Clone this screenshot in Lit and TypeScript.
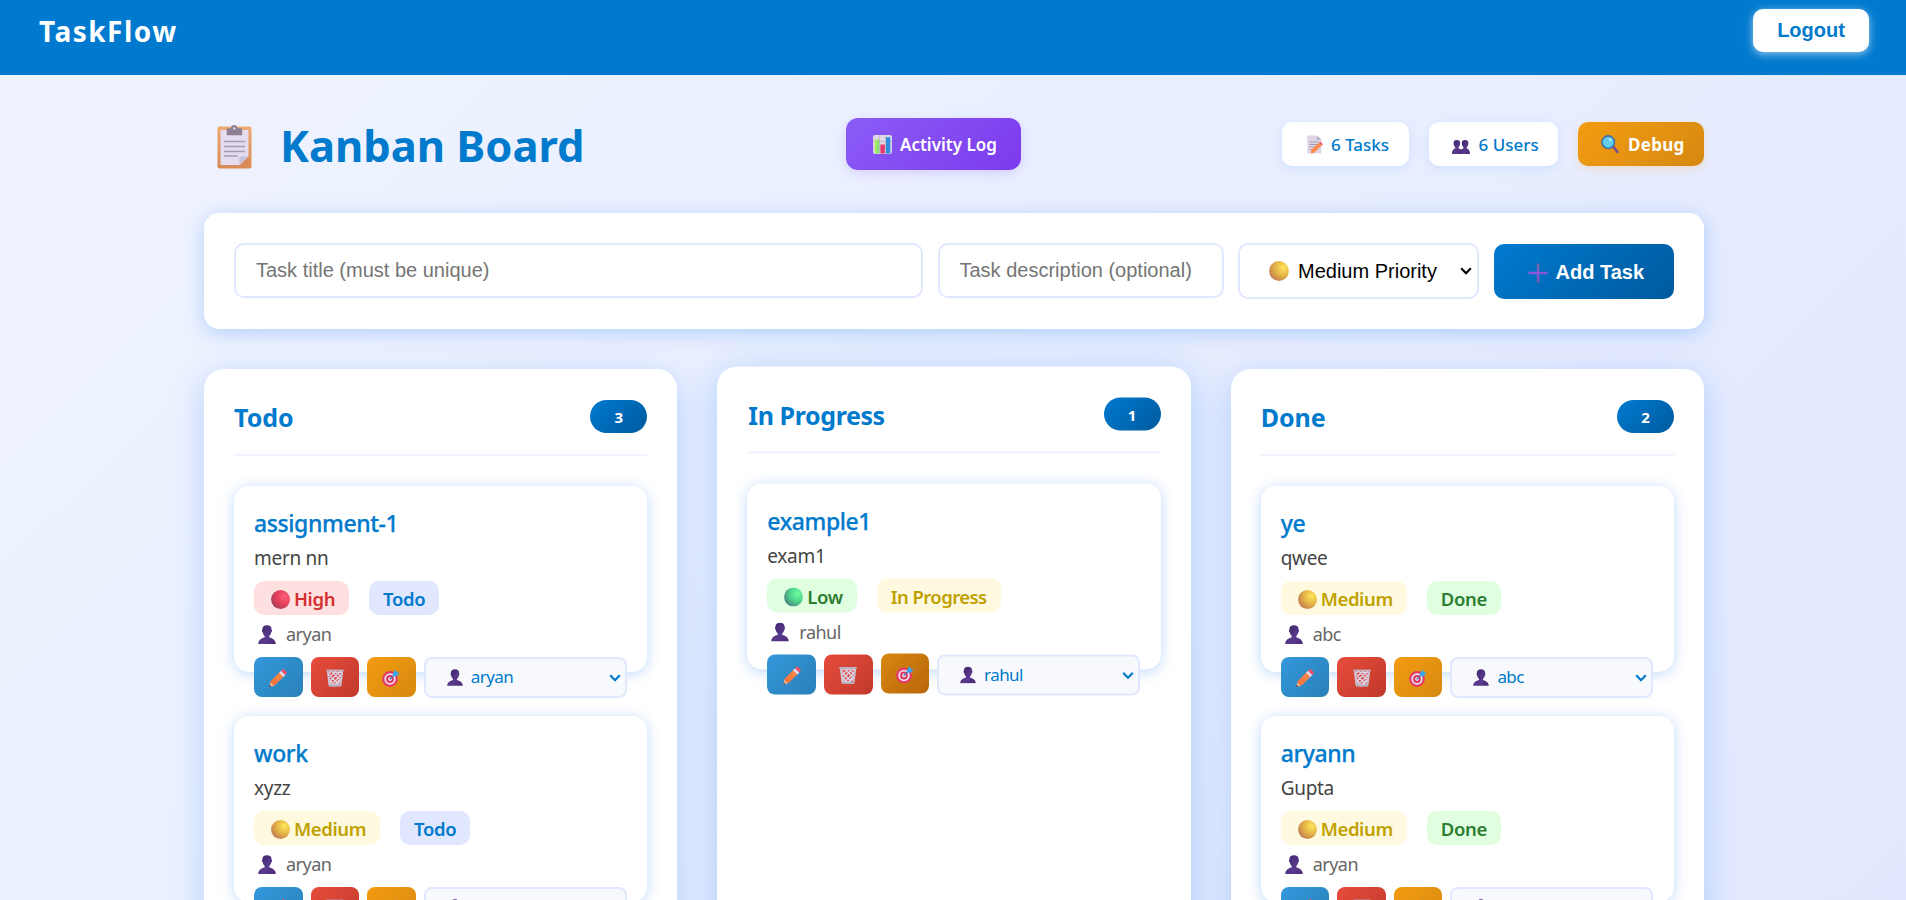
import { LitElement, html, svg, css } from "lit";
import { customElement } from "lit/decorators.js";

interface Task { title: string; desc: string; priority: "High" | "Medium" | "Low"; user: string; active?: boolean }
interface Column { name: string; count: number; key: string; tasks: Task[] }

const columns: Column[] = [
  { name: "Todo", count: 3, key: "todo", tasks: [
    { title: "assignment-1", desc: "mern nn", priority: "High", user: "aryan" },
    { title: "work", desc: "xyzz", priority: "Medium", user: "aryan" },
  ] },
  { name: "In Progress", count: 1, key: "progress", tasks: [
    { title: "example1", desc: "exam1", priority: "Low", user: "rahul", active: true },
  ] },
  { name: "Done", count: 2, key: "done", tasks: [
    { title: "ye", desc: "qwee", priority: "Medium", user: "abc" },
    { title: "aryann", desc: "Gupta", priority: "Medium", user: "aryan" },
  ] },
];

const defs = svg`
  <linearGradient id="g-person" x1="0" y1="0" x2="1" y2="1"><stop offset="0" stop-color="#3b2363"/><stop offset=".6" stop-color="#5a3a8e"/><stop offset="1" stop-color="#4a2a72"/></linearGradient>
  <radialGradient id="g-High" cx=".72" cy=".35" r=".75"><stop offset="0" stop-color="#ff5f7c"/><stop offset=".55" stop-color="#e5405a"/><stop offset="1" stop-color="#a54058"/></radialGradient>
  <radialGradient id="g-Medium" cx=".72" cy=".32" r=".8"><stop offset="0" stop-color="#ffe65c"/><stop offset=".55" stop-color="#e2b045"/><stop offset="1" stop-color="#c07a55"/></radialGradient>
  <radialGradient id="g-Low" cx=".72" cy=".32" r=".8"><stop offset="0" stop-color="#6effa0"/><stop offset=".55" stop-color="#4cd08a"/><stop offset="1" stop-color="#4a7f80"/></radialGradient>
  <linearGradient id="g-pencil" x1="1" y1="0" x2="0" y2="1"><stop offset="0" stop-color="#ff8a4a"/><stop offset="1" stop-color="#f0703a"/></linearGradient>
  <linearGradient id="g-board" x1="0" y1="0" x2="0" y2="1"><stop offset="0" stop-color="#eeaa72"/><stop offset="1" stop-color="#d98a55"/></linearGradient>
  <linearGradient id="g-plus" x1="0" y1="0" x2="0" y2="1"><stop offset="0" stop-color="#7a6a9c"/><stop offset=".5" stop-color="#8a55d8"/><stop offset="1" stop-color="#7a58b0"/></linearGradient>
  <linearGradient id="g-green" x1="0" y1="0" x2="1" y2="0"><stop offset="0" stop-color="#b4ef5a"/><stop offset="1" stop-color="#7fdc7a"/></linearGradient>
`;

const ball = (p: string, cls = "ic19") => html`<svg class=${cls} viewBox="0 0 20 20"><circle cx="10" cy="10" r="9.9" fill="url(#g-${p})"/></svg>`;
const person = (cls: string) => html`<svg class=${cls} viewBox="0 0 18 19"><path d="M9 0.2C6 0.2 4.400 1.600 4.400 4.400c-.6.2-.6 2.400.3 2.800.3 1.700 1.100 3 2 3.700v1.300C4 13.200.3 14.500.2 18.900h17.600c-.1-4.400-3.800-5.700-6.500-6.700v-1.300c.9-.7 1.700-2 2-3.700.9-.4.9-2.600.3-2.800C13.600 1.600 12 .2 9 .2z" fill="url(#g-person)"/></svg>`;
const people = html`<svg class="people" viewBox="0 0 18 14"><g fill="url(#g-person)"><path d="M4.900.1C2.500.1 1.600 1.200 1.600 3c0 1.800.6 3.400 1.700 4.300v1C1.500 9.100.1 10.200 0 13.900h9V9.500L6.500 8.300v-1C7.600 6.400 8.200 4.800 8.200 3 8.200 1.200 7.300.1 4.900.1z"/><path d="M13.100.1c-2.400 0-3.300 1.100-3.300 2.900 0 1.800.6 3.400 1.700 4.300v1L9 9.500v4.400H18c-.1-3.700-1.500-4.800-3.300-5.600v-1c1.100-.9 1.700-2.500 1.700-4.300 0-1.800-.9-2.900-3.300-2.900z"/></g></svg>`;
const pencil = html`<svg class="ic18" viewBox="0 0 18 18"><path d="M1.400 12.400 11 2.800l4.200 4.200-9.600 9.600-4.800 1.200z" fill="url(#g-pencil)"/><path d="M.3 17.900l1-4.600 3.600 3.600z" fill="#e8b99a"/><path d="M.2 18l.5-2.200L2.500 17.500z" fill="#5a3040"/><path d="M10.100 3.700l1.900-1.900 4.300 4.300-1.900 1.900z" fill="#e3dcec"/><path d="M12 1.800 13.200.7c.6-.6 1.500-.6 2.100 0l2 2c.6.600.6 1.500 0 2.100l-1.100 1.200z" fill="#f8506a"/></svg>`;
const trash = html`<svg class="ic18" viewBox="0 0 18 18"><path d="M1.300 1.500h15.400L14.900 17.500H3.100z" fill="#e04a50"/><g stroke="#dcd6e4" stroke-width="1.300" fill="none"><path d="M2.200 5l3.300-3 9.300 9.500-5.500 5.500L2.600 9.500 9.500 2l6.300 6.600L7.300 17 3.300 13 14 2l2.300 3L4.500 16.500M5.500 2 2.500 5l11 11.500M13 2l3 3"/></g><path d="M1.600 1.500 3.500 17M16.400 1.500 14.500 17" stroke="#c9c3d2" stroke-width="1.700"/><path d="M.4.600h17.200v1.800H.4z" fill="#bdb4c4"/><path d="M3 15.600h12v2H3z" fill="#b5adbd"/></svg>`;
const target = html`<svg class="ic18" viewBox="0 0 18 18"><circle cx="8" cy="10" r="7.900" fill="#e33a68"/><circle cx="8" cy="10" r="5.700" fill="#f0dfea"/><circle cx="8" cy="10" r="3.900" fill="#dd3563"/><circle cx="8" cy="10" r="1.900" fill="#f0dfea"/><path d="M7.700 10.300 13 5" stroke="#3b6fb0" stroke-width="1.200"/><path d="M10.700 4.200 14 .6l.7 2.700L17.700 4l-3.300 3.500-3-.5z" fill="#38a4ee"/></svg>`;
const clipboard = html`<svg class="clip" viewBox="0 0 35 44"><rect x=".5" y="1.500" width="34" height="42" rx="2" fill="url(#g-board)"/><path d="M3.500 5h28v27l-8 8h-20z" fill="#e6dcf0"/><path d="M22.500 40.500v-9.200h9z" fill="#c9c0dc"/><path d="M22.500 40.500 31.500 31.500v9z" fill="#d98a55"/><g stroke="#a59ab0" stroke-width="1.500"><path d="M7 16.500h21M7 21.500h21M7 26.500h21M7 31h13.500"/></g><path d="M9.700 5c0-1 .8-1.800 1.800-1.800h2.300C14.200 1.200 15.300 0 17.200 0s3 1.200 3.400 3.200h2.800c1 0 1.800.8 1.800 1.800v5.200H9.700z" fill="#8c8092"/><circle cx="17.300" cy="3.500" r="1.200" fill="#e6dcf0"/></svg>`;
const chart = html`<svg class="ic19" viewBox="0 0 19 19"><rect width="19" height="19" rx="2" fill="#ded6e4"/><path d="M0 6.500h19M0 12.500h19M6.500 0v19M12.500 0v19" stroke="#bcb2c6" stroke-width=".7"/><rect x="1.800" y="4.500" width="4.400" height="14" fill="url(#g-green)"/><rect x="7.400" y="9.500" width="4.400" height="9" fill="#e23a6a"/><rect x="13" y="2.200" width="4.300" height="16.300" fill="#2f8fdc"/></svg>`;
const memo = html`<svg class="memo" viewBox="0 0 17 19"><path d="M.3.500h9.500l4.500 4.500v13.500H.3z" fill="#ded6e6"/><path d="M9.800.500v4.500h4.500z" fill="#b9afc4"/><path d="M2.500 7h9M2.500 9.500h8M2.500 12h6M2.500 14.500h3" stroke="#a59bb0" stroke-width="1"/><path d="M4.500 14.500 12 7.700l2.700 2.800-7.600 7.200-3.400.8z" fill="#fb8a4c"/><path d="M12 7.700l1.300-1.200 2.700 2.800-1.300 1.200z" fill="#f5566b"/></svg>`;
const lens = html`<svg class="lens" viewBox="0 0 18 19"><path d="M10.500 11.500 12.500 10l5.200 6.200c.7 1-.9 2.600-2 1.900z" fill="#7e4f8c"/><circle cx="7.200" cy="7.200" r="6.300" fill="#62cdea" stroke="#3f6ea5" stroke-width="1.600"/><ellipse cx="9.200" cy="4.600" rx="1.600" ry="1.100" fill="#b6edf8" transform="rotate(35 9.200 4.600)"/></svg>`;
const plus = html`<svg class="plus" viewBox="0 0 20 20"><path d="M8.800.5h2.400v8.300h8.300v2.400h-8.300v8.300H8.800v-8.300H.5V8.800h8.300z" fill="url(#g-plus)"/></svg>`;
const chevron = html`<svg class="chev" viewBox="0 0 12 8"><path d="M1.200 1.300 6 6.200l4.800-4.900" fill="none" stroke="currentColor" stroke-width="2.200"/></svg>`;

@customElement("app-root")
export class AppRoot extends LitElement {
  static styles = css`
    :host { display: block; height: 900px; overflow: hidden; box-sizing: border-box; font-family: "Noto Sans", sans-serif; color: #007acc;
      background: linear-gradient(135deg, #f0f4ff 0%, #e0e7ff 100%) 0 0 / 100% 1260px no-repeat; }
    * { box-sizing: border-box; }
    svg { display: block; flex: none; }
    .defs { width: 0; height: 0; position: absolute; }
    .top { height: 75px; background: #007acf; display: flex; align-items: flex-start; justify-content: space-between; padding: 9px 37px 0 39px; }
    .brand { margin-top: 2px; line-height: 40px; font-size: 28px; font-weight: 700; color: #fff; letter-spacing: 1.500px; }
    .logout { width: 116px; height: 43px; border-radius: 10px; background: #fff; font: 700 20px/43px "Liberation Sans", Arial, sans-serif; text-align: center; box-shadow: 0 2px 8px rgba(255,255,255,.6); }
    .main { width: 1500px; margin: 0 0 0 204px; padding-top: 39px; }
    .head { height: 60px; display: flex; justify-content: space-between; align-items: center; }
    h1 { margin: 0; width: 381px; padding: 2px 0 0 13px; line-height: 60px; display: flex; align-items: center; font-size: 43.500px; font-weight: 700; white-space: nowrap; }
    .clip { width: 35px; height: 44px; margin: 3px 28px 0 0; }
    .activity { width: 175px; height: 52px; border-radius: 12px; display: flex; align-items: center; gap: 8px; padding-left: 27px; color: #fff; font-size: 17px; font-weight: 600; background: linear-gradient(135deg, #8b5cf6, #7c3aed); box-shadow: 0 4px 12px rgba(139,92,246,.2); white-space: nowrap; }
    .chips { display: flex; gap: 20px; width: 422px; }
    .chip { height: 44px; border-radius: 10px; background: #fff; display: flex; align-items: center; font-size: 17px; font-weight: 500; white-space: nowrap; box-shadow: 0 3px 10px rgba(0,122,255,.1); }
    .chip.tasks { width: 127px; padding-left: 25px; gap: 7px; }
    .chip.users { width: 129px; padding-left: 23px; gap: 8.500px; }
    .chip.debug { width: 126px; padding-left: 23px; gap: 9px; color: #fff; font-weight: 700; letter-spacing: .3px; background: linear-gradient(135deg, #f39c12, #d68910); box-shadow: 0 3px 10px rgba(243,156,18,.2); }
    .memo { width: 17px; height: 19px; } .lens { width: 18px; height: 19px; }
    .people { width: 18px; height: 14px; margin-top: 6px; }
    .ic18 { width: 18px; height: 18px; } .ic19 { width: 19px; height: 19px; } .ic20 { width: 20px; height: 20px; }
    .form { margin-top: 39px; height: 116px; padding: 30px; border-radius: 15px; background: #fff; display: flex; align-items: flex-start; gap: 14.500px; font: 400 20px "Liberation Sans", Arial, sans-serif; box-shadow: 0 4px 20px rgba(0,110,240,.25); }
    .field { height: 55px; border: 2px solid #e0e7ff; border-radius: 10px; padding-left: 20px; line-height: 50px; color: #757575; white-space: nowrap; }
    .field.title { width: 689px; } .field.desc { width: 286px; }
    .pick { width: 241px; height: 56px; border: 2px solid #e0e7ff; border-radius: 10px; display: flex; align-items: center; padding: 0 5px 0 29px; color: #000; }
    .pick span { margin-left: 9px; flex: 1; white-space: nowrap; } .pick .chev { width: 12px; height: 8px; }
    .add { width: 180.500px; height: 55px; margin-top: 1px; border-radius: 10px; display: flex; align-items: center; gap: 8px; padding: 2px 0 0 34px; color: #fff; font-weight: 700; background: linear-gradient(135deg, #007acf, #005a9e); white-space: nowrap; }
    .plus { width: 20px; height: 20px; }
    .board { margin-top: 40px; display: grid; grid-template-columns: repeat(3, 1fr); gap: 40px; }
    .col { height: 900px; border-radius: 20px; background: #fff; padding: 30px; box-shadow: 0 8px 32px rgba(0,110,240,.23); }
    .col.progress { transform: translateY(-2.500px); box-shadow: 0 8px 38px rgba(0,110,240,.28); }
    .col-head { height: 57px; border-bottom: 2px solid #f0f4ff; display: flex; justify-content: space-between; align-items: flex-start; margin-bottom: 30px; }
    h2 { margin: 0; font-size: 25px; line-height: 36px; font-weight: 700; }
    .progress h2 { letter-spacing: -.4px; padding-left: 1px; }
    .count { width: 57px; height: 33px; margin-top: 1px; border-radius: 17px; background: linear-gradient(135deg, #007acf, #005a9e); color: #fff; font-size: 15px; line-height: 34px; font-weight: 700; text-align: center; }
    .card { height: 186px; margin-bottom: 44px; padding: 20px; border-radius: 15px; background: #fff; box-shadow: 0 2px 14px rgba(0,110,240,.26); }
    h3 { margin: 0; font-size: 23px; line-height: 34px; font-weight: 500; letter-spacing: -.4px; -webkit-text-stroke: .25px currentColor; }
    .text { margin-top: 4px; font-size: 19px; line-height: 28px; color: #444; letter-spacing: -.3px; }
    .badges { margin-top: 9px; display: flex; gap: 20px; font-size: 18.500px; font-weight: 600; line-height: 35px; letter-spacing: -.38px; }
    .badge { height: 34px; border-radius: 10px; padding: 0 14px; display: flex; white-space: nowrap; }
    .badge .ic19 { margin: 9px 4px 0 3px; }
    .High { background: #ffe0e0; color: #d32f2f; } .Medium, .progress-tag { background: #fff9e0; color: #bfa100; } .Low, .done-tag { background: #e0ffe0; color: #2e7d32; } .todo-tag { background: #e0e7ff; color: #007acc; }
    .progress-tag { letter-spacing: -.57px; }
    .who { margin-top: 4px; height: 31px; padding-left: 4px; display: flex; align-items: center; gap: 10px; font-size: 18px; line-height: 31px; color: #666; letter-spacing: -.5px; }
    .p18 { width: 18px; height: 19px; } .p16 { width: 16px; height: 17px; }
    .acts { margin-top: 7px; display: flex; gap: 8px; }
    .btn { width: 48.600px; height: 40px; border-radius: 8px; display: flex; align-items: center; justify-content: center; padding-top: 2px; }
    .edit { background: linear-gradient(135deg, #3498db, #2980b9); } .del { background: linear-gradient(135deg, #e74c3c, #c0392b); } .aim { background: linear-gradient(135deg, #f39c12, #d68910); }
    .aim.active { background: linear-gradient(135deg, #d68910, #b9650c); transform: translateY(-1px); }
    .sel { width: 203px; height: 41px; border: 2px solid #e0e7ff; border-radius: 8px; background: #f8f9fc; display: flex; align-items: center; padding: 0 4px 1px 21px; font-size: 17px; line-height: 36px; letter-spacing: -.6px; }
    .sel span { flex: 1; margin-left: 8px; } .sel .chev { width: 12px; height: 8px; margin-top: 2px; }
  `;
  card(t: Task, c: Column) {
    return html`<article class="card">
      <h3>${t.title}</h3>
      <div class="text">${t.desc}</div>
      <div class="badges"><div class="badge ${t.priority}">${ball(t.priority)}<span>${t.priority}</span></div><div class="badge ${c.key}-tag"><span>${c.name}</span></div></div>
      <div class="who">${person("p18")}<span>${t.user}</span></div>
      <div class="acts"><div class="btn edit">${pencil}</div><div class="btn del">${trash}</div><div class="btn aim ${t.active ? "active" : ""}">${target}</div>
        <div class="sel">${person("p16")}<span>${t.user}</span>${chevron}</div></div>
    </article>`;
  }
  render() {
    return html`<svg class="defs"><defs>${defs}</defs></svg>
      <header class="top"><span class="brand">TaskFlow</span><div class="logout">Logout</div></header>
      <main class="main">
        <section class="head"><h1>${clipboard}<span>Kanban Board</span></h1>
          <div class="activity">${chart}<span>Activity Log</span></div>
          <div class="chips"><div class="chip tasks">${memo}<span>6 Tasks</span></div><div class="chip users">${people}<span>6 Users</span></div><div class="chip debug">${lens}<span>Debug</span></div></div></section>
        <section class="form"><div class="field title"><span>Task title (must be unique)</span></div><div class="field desc"><span>Task description (optional)</span></div>
          <div class="pick">${ball("Medium", "ic20")}<span>Medium Priority</span>${chevron}</div><div class="add">${plus}<span>Add Task</span></div></section>
        <section class="board">${columns.map((c) => html`<div class="col ${c.key}"><div class="col-head"><h2>${c.name}</h2><div class="count">${c.count}</div></div>${c.tasks.map((t) => this.card(t, c))}</div>`)}</section>
      </main>`;
  }
}
